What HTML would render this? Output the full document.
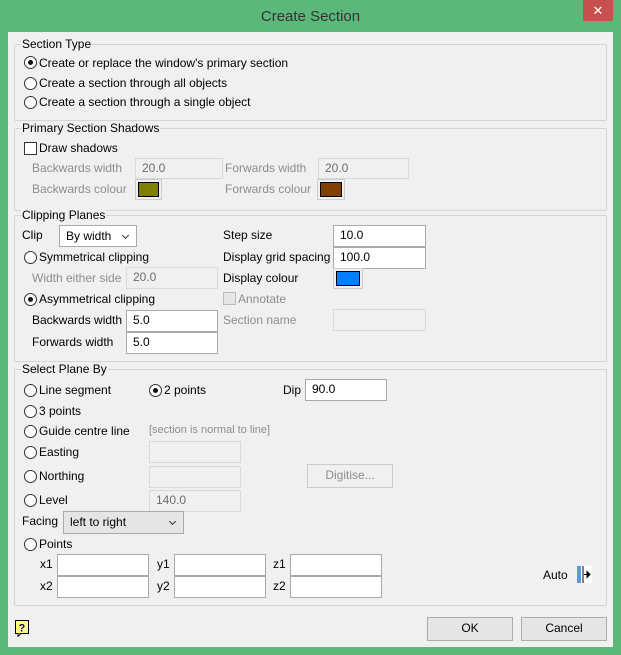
<!DOCTYPE html>
<html><head><style>
*{box-sizing:border-box;margin:0;padding:0}
body{width:621px;height:655px;background:#5cb87a;font-family:"Liberation Sans",sans-serif;font-size:12px;color:#000;position:relative;overflow:hidden}
.a{position:absolute;white-space:nowrap}
#cl{position:absolute;left:8px;top:32px;width:605px;height:615px;background:#f0f0f0}
.title{position:absolute;left:0;width:621px;top:8px;text-align:center;font-size:15px;color:#333}
.close{position:absolute;left:583px;top:0px;width:30px;height:21px;background:#c7504f;color:#fff;text-align:center;font-size:13px;line-height:21px}
.g{position:absolute;border:1px solid #d5d5d5;border-radius:2px}
.gl{position:absolute;background:#f0f0f0;padding:0 1px;line-height:14px}
.r{position:absolute;width:13px;height:13px;border:1px solid #333;border-radius:50%;background:#fff}
.r.on::after{content:"";position:absolute;left:3px;top:3px;width:5px;height:5px;border-radius:50%;background:#111}
.cb{position:absolute;width:13px;height:13px;border:1px solid #333;background:#fff}
.in{position:absolute;background:#fff;border:1px solid #aaa;padding-left:6px;line-height:19px}
.in.d{background:#f0f0f0;border-color:#d8d8d8;color:#6d6d6d}
.gr{color:#8d8d8d}
.sel{position:absolute;background:#fff;border:1px solid #aaa;padding-left:6px;line-height:20px}
.sel::after{content:"";position:absolute;right:8px;top:7px;width:4px;height:4px;border-right:1.5px solid #333;border-bottom:1.5px solid #333;transform:rotate(45deg)}
.sw{position:absolute;border:1px solid #ccc;padding:2px}
.sw div{width:100%;height:100%;border:1px solid #000}
.btn{position:absolute;border:1px solid #adadad;background:#e5e5e5;text-align:center;line-height:21px}
.lb{position:absolute;line-height:14px;white-space:nowrap}
</style></head><body>
<div class="title">Create Section</div>
<div class="close">✕</div>
<div id="cl"></div>

<div class="g" style="left:14px;top:44px;width:593px;height:77px"></div>
<div class="gl a" style="left:21px;top:37px">Section Type</div>
<div class="r on" style="left:24px;top:56px"></div><div class="lb" style="left:39px;top:56px">Create or replace the window's primary section</div>
<div class="r" style="left:24px;top:77px"></div><div class="lb" style="left:39px;top:76px">Create a section through all objects</div>
<div class="r" style="left:24px;top:96px"></div><div class="lb" style="left:39px;top:95px">Create a section through a single object</div>

<div class="g" style="left:14px;top:128px;width:593px;height:83px"></div>
<div class="gl a" style="left:21px;top:121px">Primary Section Shadows</div>
<div class="cb" style="left:24px;top:142px"></div><div class="lb" style="left:39px;top:141px">Draw shadows</div>
<div class="lb gr" style="left:32px;top:161px">Backwards width</div>
<div class="in d" style="left:135px;top:158px;width:88px;height:21px">20.0</div>
<div class="lb gr" style="left:225px;top:161px">Forwards width</div>
<div class="in d" style="left:318px;top:158px;width:91px;height:21px">20.0</div>
<div class="lb gr" style="left:32px;top:182px">Backwards colour</div>
<div class="sw" style="left:135px;top:179px;width:27px;height:21px"><div style="background:#808000"></div></div>
<div class="lb gr" style="left:225px;top:182px">Forwards colour</div>
<div class="sw" style="left:317px;top:179px;width:28px;height:21px"><div style="background:#804000"></div></div>

<div class="g" style="left:14px;top:215px;width:593px;height:147px"></div>
<div class="gl a" style="left:21px;top:208px">Clipping Planes</div>
<div class="lb" style="left:22px;top:228px">Clip</div>
<div class="sel" style="left:59px;top:225px;width:78px;height:22px">By width</div>
<div class="r" style="left:24px;top:251px"></div><div class="lb" style="left:39px;top:250px">Symmetrical clipping</div>
<div class="lb gr" style="left:32px;top:271px">Width either side</div>
<div class="in d" style="left:126px;top:267px;width:92px;height:22px">20.0</div>
<div class="r on" style="left:24px;top:293px"></div><div class="lb" style="left:39px;top:292px">Asymmetrical clipping</div>
<div class="lb" style="left:32px;top:313px">Backwards width</div>
<div class="in" style="left:126px;top:310px;width:92px;height:22px">5.0</div>
<div class="lb" style="left:32px;top:335px">Forwards width</div>
<div class="in" style="left:126px;top:332px;width:92px;height:22px">5.0</div>
<div class="lb" style="left:223px;top:228px">Step size</div>
<div class="in" style="left:333px;top:225px;width:93px;height:22px">10.0</div>
<div class="lb" style="left:223px;top:250px">Display grid spacing</div>
<div class="in" style="left:333px;top:247px;width:93px;height:22px">100.0</div>
<div class="lb" style="left:223px;top:271px">Display colour</div>
<div class="sw" style="left:333px;top:268px;width:30px;height:21px"><div style="background:#0080ff"></div></div>
<div class="cb" style="left:223px;top:292px;border-color:#bbb;background:#e6e6e6"></div><div class="lb gr" style="left:238px;top:292px">Annotate</div>
<div class="lb gr" style="left:223px;top:313px">Section name</div>
<div class="in d" style="left:333px;top:309px;width:93px;height:22px"></div>

<div class="g" style="left:14px;top:369px;width:593px;height:237px"></div>
<div class="gl a" style="left:21px;top:362px">Select Plane By</div>
<div class="r" style="left:24px;top:384px"></div><div class="lb" style="left:39px;top:383px">Line segment</div>
<div class="r on" style="left:149px;top:384px"></div><div class="lb" style="left:164px;top:383px">2 points</div>
<div class="lb" style="left:283px;top:383px">Dip</div>
<div class="in" style="left:305px;top:379px;width:82px;height:22px">90.0</div>
<div class="r" style="left:24px;top:405px"></div><div class="lb" style="left:39px;top:404px">3 points</div>
<div class="r" style="left:24px;top:425px"></div><div class="lb" style="left:39px;top:424px">Guide centre line</div>
<div class="lb gr" style="left:149px;top:423px;font-size:11px">[section is normal to line]</div>
<div class="r" style="left:24px;top:446px"></div><div class="lb" style="left:39px;top:445px">Easting</div>
<div class="in d" style="left:149px;top:441px;width:92px;height:22px"></div>
<div class="r" style="left:24px;top:470px"></div><div class="lb" style="left:39px;top:469px">Northing</div>
<div class="in d" style="left:149px;top:466px;width:92px;height:22px"></div>
<div class="btn gr" style="left:307px;top:464px;width:86px;height:24px;background:#f0f0f0;border-color:#ccc">Digitise...</div>
<div class="r" style="left:24px;top:494px"></div><div class="lb" style="left:39px;top:493px">Level</div>
<div class="in d" style="left:149px;top:490px;width:92px;height:22px">140.0</div>
<div class="lb" style="left:22px;top:514px">Facing</div>
<div class="sel" style="left:63px;top:511px;width:121px;height:23px;background:#e5e5e5">left to right</div>
<div class="r" style="left:24px;top:538px"></div><div class="lb" style="left:39px;top:537px">Points</div>
<div class="lb" style="left:40px;top:557px">x1</div><div class="in" style="left:57px;top:554px;width:92px;height:22px"></div>
<div class="lb" style="left:40px;top:579px">x2</div><div class="in" style="left:57px;top:576px;width:92px;height:22px"></div>
<div class="lb" style="left:157px;top:557px">y1</div><div class="in" style="left:174px;top:554px;width:92px;height:22px"></div>
<div class="lb" style="left:157px;top:579px">y2</div><div class="in" style="left:174px;top:576px;width:92px;height:22px"></div>
<div class="lb" style="left:273px;top:557px">z1</div><div class="in" style="left:290px;top:554px;width:92px;height:22px"></div>
<div class="lb" style="left:273px;top:579px">z2</div><div class="in" style="left:290px;top:576px;width:92px;height:22px"></div>
<div class="lb" style="left:543px;top:568px">Auto</div>
<svg class="a" style="left:577px;top:566px" width="16" height="17"><rect x="0" y="0" width="4" height="17" fill="#5a9be0"/><rect x="4" y="0" width="11" height="17" fill="#fff"/><line x1="6" y1="0" x2="6" y2="17" stroke="#000"/><path d="M7 8.5h4M10 5.5l3 3-3 3z" stroke="#000" fill="#000"/></svg>

<svg class="a" style="left:15px;top:620px" width="16" height="17"><rect x="0.5" y="0.5" width="13" height="13" fill="#ffff80" stroke="#000"/><path d="M3 13.5l0 3 3-3" fill="#fff" stroke="#000"/><text x="3.5" y="11.5" font-size="11" font-weight="bold" font-family="Liberation Sans" fill="#000080">?</text></svg>
<div class="btn" style="left:427px;top:617px;width:86px;height:24px">OK</div>
<div class="btn" style="left:521px;top:617px;width:86px;height:24px">Cancel</div>
</body></html>
